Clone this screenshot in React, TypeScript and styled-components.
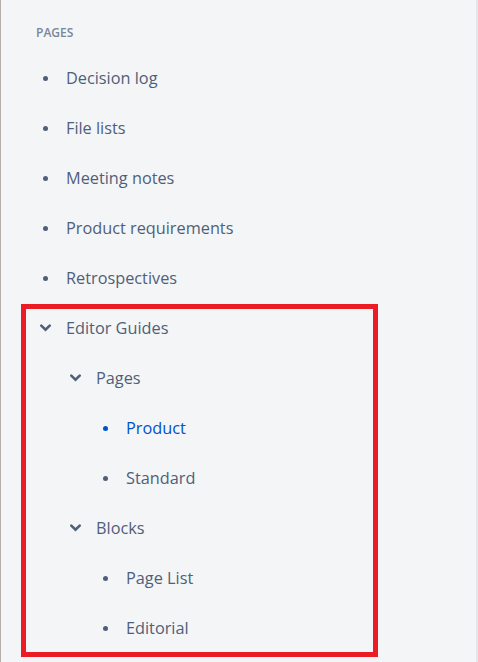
import React from "react";
import styled, { createGlobalStyle } from "styled-components";

const Global = createGlobalStyle`
  html, body { margin: 0; padding: 0; background: #f4f5f7; }
  body { font-family: "Open Sans", "Noto Sans", sans-serif; }
`;

const Sidebar = styled.nav`
  box-sizing: border-box;
  width: 478px;
  height: 662px;
  background: #f4f5f7;
  border-left: 1px solid #b8aeae;
  border-right: 2px solid #e4e6ea;
  padding-top: 25px;
  overflow: hidden;
`;

const Heading = styled.div`
  padding-left: 35px;
  font-size: 12px;
  line-height: 16px;
  font-weight: 600;
  color: #7a869a;
  text-transform: uppercase;
  margin-bottom: 12px;
`;

const List = styled.ul`
  list-style: none;
  margin: 0;
  padding: 0;
`;

const Group = styled.li`
  position: relative;
  &::after {
    content: "";
    position: absolute;
    top: 1px;
    left: 20px;
    width: 357px;
    height: 353px;
    box-sizing: border-box;
    border: 5px solid #ec1c24;
    pointer-events: none;
  }
`;

const Row = styled.div<{ $level: number }>`
  display: flex;
  align-items: center;
  height: 50px;
  padding-left: ${(p) => p.$level * 30 - 1}px;
`;

const Marker = styled.span`
  width: 30px;
  display: flex;
  justify-content: center;
  align-items: center;
  flex: none;
`;

const Dot = styled.span<{ $active?: boolean }>`
  width: 5px;
  height: 5px;
  border-radius: 50%;
  background: ${(p) => (p.$active ? "#0052cc" : "#505f79")};
`;

const Label = styled.span<{ $active?: boolean }>`
  margin-left: 6px;
  margin-bottom: 1px;
  font-size: 16.3px;
  line-height: 22px;
  color: ${(p) => (p.$active ? "#0052cc" : "#505f79")};
  white-space: nowrap;
`;

const Chevron = () => (
  <svg width="11" height="8" viewBox="0 0 11 8" aria-hidden>
    <path d="M1.3 1.6 L5.5 5.6 L9.7 1.6" fill="none" stroke="#505f79" strokeWidth="2.6" strokeLinecap="round" strokeLinejoin="miter" />
  </svg>
);

const Item = ({ level, label, active, open }: { level: number; label: string; active?: boolean; open?: boolean }) => (
  <Row $level={level}>
    <Marker>{open ? <Chevron /> : <Dot $active={active} />}</Marker>
    <Label $active={active}>{label}</Label>
  </Row>
);

export default function App() {
  return (
    <>
      <Global />
      <Sidebar>
        <Heading>Pages</Heading>
        <List>
          {["Decision log", "File lists", "Meeting notes", "Product requirements", "Retrospectives"].map((t) => (
            <li key={t}>
              <Item level={1} label={t} />
            </li>
          ))}
          <Group>
            <Item level={1} label="Editor Guides" open />
            <Item level={2} label="Pages" open />
            <Item level={3} label="Product" active />
            <Item level={3} label="Standard" />
            <Item level={2} label="Blocks" open />
            <Item level={3} label="Page List" />
            <Item level={3} label="Editorial" />
          </Group>
        </List>
      </Sidebar>
    </>
  );
}
